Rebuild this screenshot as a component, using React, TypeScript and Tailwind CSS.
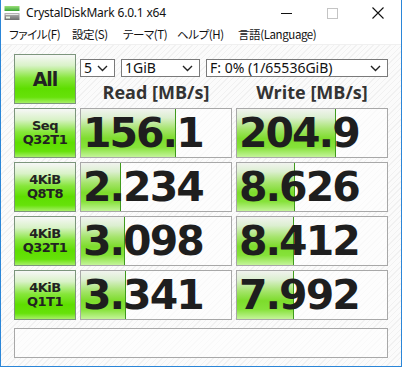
import React from "react";

interface Row {
  label: string[];
  read: string;
  write: string;
  readFill: number;
  writeFill: number;
}

const rows: Row[] = [
  { label: ["Seq", "Q32T1"], read: "156.1", write: "204.9", readFill: 95, writeFill: 99 },
  { label: ["4KiB", "Q8T8"], read: "2.234", write: "8.626", readFill: 40, writeFill: 58 },
  { label: ["4KiB", "Q32T1"], read: "3.098", write: "8.412", readFill: 44, writeFill: 57 },
  { label: ["4KiB", "Q1T1"], read: "3.341", write: "7.992", readFill: 45, writeFill: 57 },
];

const menu = [
  { text: "ファイル(F)", w: "w-[63px]" },
  { text: "設定(S)", w: "w-[51px]" },
  { text: "テーマ(T)", w: "w-[54px]" },
  { text: "ヘルプ(H)", w: "w-[61px]" },
  { text: "言語(Language)", w: "" },
];

const hatch =
  "bg-[repeating-linear-gradient(135deg,#fbfbfb_0px,#fbfbfb_3px,#f1f1f1_3px,#f1f1f1_4px)]";

const greenButton =
  "border border-[#7c957c] bg-[linear-gradient(to_bottom,#f7f7f7_0%,#d9f2c8_22%,#86e63a_48%,#5ede00_70%,#66e20a_88%,#a6ef66_100%)] text-[#222] font-bold flex flex-col items-center justify-center";

function Chevron() {
  return (
    <svg width="11" height="7" viewBox="0 0 11 7" className="shrink-0">
      <polyline points="1,1 5.5,5.5 10,1" fill="none" stroke="#222" strokeWidth="1.4" />
    </svg>
  );
}

function Select({ value, className }: { value: string; className: string }) {
  return (
    <div
      className={
        "h-[18px] border border-[#7a7a7a] bg-white flex items-center justify-between pl-[3px] pr-[6px] text-[14px] text-[#111] leading-none " +
        className
      }
    >
      <span>{value}</span>
      <Chevron />
    </div>
  );
}

function ValueBox({ value, fill }: { value: string; fill: number }) {
  return (
    <div className="relative h-[50px] border border-[#a8a8a8] bg-white/60 overflow-hidden">
      {/* score bar */}
      <div
        className="absolute left-0 top-0 bottom-0 border-r border-r-[#3f9a1c] bg-[linear-gradient(to_bottom,#f1f3ef_0%,#dcefd0_18%,#a4e46a_42%,#7ddc2c_62%,#86e23a_80%,#c4f49a_100%)]"
        style={{ width: fill }}
      />
      <div className="relative h-full flex items-center pl-[2px] font-['DejaVu_Sans',sans-serif] font-bold text-[41px] tracking-[-2px] text-[#1e1e1e] leading-none">
        {value}
      </div>
    </div>
  );
}

export default function App() {
  return (
    <div className="w-[402px] h-[367px] bg-white border-x border-b border-[#2b86d8] flex flex-col font-['Noto_Sans','Noto_Sans_CJK_JP',sans-serif] overflow-hidden">
      {/* Title bar */}
      <div className="h-[26px] flex items-center shrink-0">
        <svg width="16" height="16" viewBox="0 0 16 16" className="ml-[3px]">
          <defs>
            <linearGradient id="gtop" x1="0" y1="0" x2="0" y2="1">
              <stop offset="0" stopColor="#9be07a" />
              <stop offset="1" stopColor="#3aa536" />
            </linearGradient>
            <linearGradient id="gbody" x1="0" y1="0" x2="0" y2="1">
              <stop offset="0" stopColor="#b8b8b8" />
              <stop offset="1" stopColor="#6e6e6e" />
            </linearGradient>
          </defs>
          <rect x="0.5" y="1" width="15" height="5" fill="url(#gtop)" />
          <rect x="0.5" y="8" width="15" height="7" fill="url(#gbody)" />
          <rect x="1.5" y="9" width="13" height="1" fill="#e8e8e8" />
          <rect x="2" y="11.5" width="4" height="2" fill="#e9f5e4" />
        </svg>
        <span className="ml-[6px] text-[12px] tracking-[-0.2px] text-[#111] font-['Noto_Sans',sans-serif]">
          CrystalDiskMark 6.0.1 x64
        </span>
        <div className="ml-auto flex items-center h-full">
          <div className="w-[46px] h-full flex items-center justify-center">
            <div className="w-[11px] h-px bg-[#111]" />
          </div>
          <div className="w-[46px] h-full flex items-center justify-center">
            <div className="w-[11px] h-[11px] border border-[#c4c4c4]" />
          </div>
          <div className="w-[46px] h-full flex items-center justify-center">
            <svg width="12" height="12" viewBox="0 0 12 12">
              <path d="M0.5 0.5 L11.5 11.5 M11.5 0.5 L0.5 11.5" stroke="#111" strokeWidth="1.1" />
            </svg>
          </div>
        </div>
      </div>

      {/* Menu bar */}
      <div className="h-[18px] flex items-center pl-[8px] text-[11.5px] text-[#111] font-['Noto_Sans_CJK_JP',sans-serif] [font-feature-settings:'palt'] tracking-[-0.4px] shrink-0 border-b border-[#f0f0f0] box-content">
        {menu.map((m) => (
          <span key={m.text} className={m.w + " whitespace-nowrap"}>
            {m.text}
          </span>
        ))}
      </div>

      {/* Main */}
      <div className={"flex-1 pl-[13px] pt-[9px] " + hatch}>
        <div className="grid grid-cols-[62px_152px_152px] gap-x-[4px] gap-y-[4px]">
          <div className={greenButton + " h-[50px] text-[19px] font-['DejaVu_Sans',sans-serif] tracking-[-1px]"}>
            All
          </div>
          <div className="col-span-2 flex flex-col">
            <div className="flex mt-[5px] gap-[6px]">
              <Select value="5" className="w-[35px]" />
              <Select value="1GiB" className="w-[79px]" />
              <Select value="F: 0% (1/65536GiB)" className="w-[182px]" />
            </div>
            <div className="grid grid-cols-[152px_152px] gap-x-[4px] flex-1 items-center text-[18px] font-bold text-[#333] font-['Open_Sans',sans-serif]">
              <div className="text-center leading-none pt-[2px]">Read [MB/s]</div>
              <div className="text-center leading-none pt-[2px]">Write [MB/s]</div>
            </div>
          </div>

          {rows.map((row, i) => (
            <React.Fragment key={i}>
              <div className={greenButton + " h-[50px] text-[13px] leading-[14px] font-['DejaVu_Sans',sans-serif] tracking-[-0.5px]"}>
                <span>{row.label[0]}</span>
                <span>{row.label[1]}</span>
              </div>
              <ValueBox value={row.read} fill={row.readFill} />
              <ValueBox value={row.write} fill={row.writeFill} />
            </React.Fragment>
          ))}
        </div>

        {/* Status bar */}
        <div className="mt-[8px] w-[374px] h-[30px] border border-[#a8a8a8] bg-white/60" />
      </div>
    </div>
  );
}
